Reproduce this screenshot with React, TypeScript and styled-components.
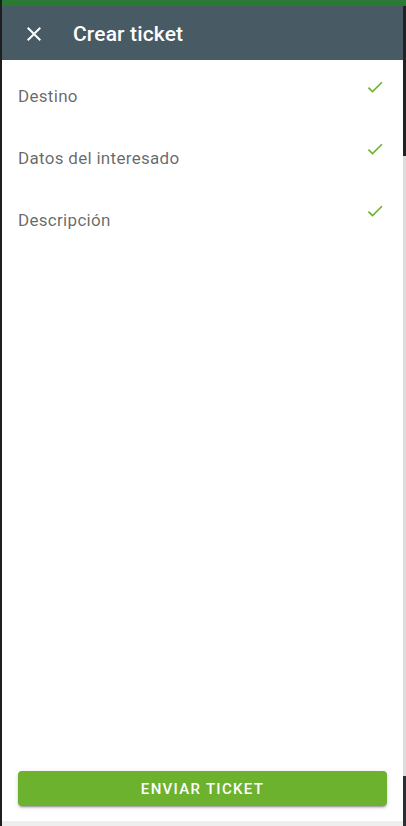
import React from "react";
import styled, { createGlobalStyle } from "styled-components";

const Global = createGlobalStyle`
  html, body { margin: 0; padding: 0; background: #1e1e1e; }
  body { font-family: Roboto, "Liberation Sans", sans-serif; }
  #root { height: 826px; }
`;

const Page = styled.div`
  display: flex;
  height: 826px;
  width: 406px;
  overflow: hidden;
`;

const LeftEdge = styled.div`
  width: 2px;
  flex: none;
  background: #1e1e1e;
`;

const RightEdge = styled.div`
  width: 3px;
  flex: none;
  display: flex;
  flex-direction: column;
`;

const EdgePart = styled.div<{ $h?: number; $c: string }>`
  background: ${(p) => p.$c};
  ${(p) => (p.$h ? `height: ${p.$h}px; flex: none;` : "flex: 1;")}
`;

const Panel = styled.div`
  flex: 1;
  display: flex;
  flex-direction: column;
  background: #fff;
`;

const TopStrip = styled.div`
  height: 6px;
  background: #2a7a35;
  flex: none;
`;

const Header = styled.header`
  height: 54px;
  flex: none;
  background: #485a64;
  display: flex;
  align-items: center;
  padding-left: 20px;
  gap: 27px;
  color: #fff;
`;

const CloseBtn = styled.button`
  width: 24px;
  height: 24px;
  padding: 0;
  border: 0;
  background: none;
  color: #fff;
  display: flex;
  align-items: center;
  justify-content: center;
  cursor: pointer;
  margin-top: 1px;
`;

const Title = styled.h1`
  margin: 2px 0 0;
  font-size: 21px;
  font-weight: 500;
  letter-spacing: 0.15px;
  line-height: 24px;
`;

const Steps = styled.ul`
  list-style: none;
  margin: 0;
  padding: 0;
  flex: 1;
`;

const Step = styled.li`
  height: 62px;
  display: flex;
  justify-content: space-between;
  padding: 0 18px 0 16px;
  box-sizing: border-box;
`;

const StepLabel = styled.span`
  margin-top: 24px;
  font-size: 17px;
  line-height: 25px;
  color: rgba(0, 0, 0, 0.6);
  letter-spacing: 0.3px;
`;

const CheckWrap = styled.span`
  margin-top: 17px;
  width: 20px;
  height: 20px;
  color: #6cb22f;
`;

const Footer = styled.div`
  padding: 0 16px 15px;
  flex: none;
`;

const SendButton = styled.button`
  width: 100%;
  height: 35px;
  border: 0;
  border-radius: 4px;
  background: #6cb22f;
  color: #fff;
  font-family: Roboto, "Liberation Sans", sans-serif;
  font-size: 15px;
  font-weight: 500;
  letter-spacing: 1.3px;
  text-transform: uppercase;
  box-shadow: 0 3px 1px -2px rgba(0, 0, 0, 0.2), 0 2px 2px 0 rgba(0, 0, 0, 0.14),
    0 1px 5px 0 rgba(0, 0, 0, 0.12);
  cursor: pointer;
`;

const BottomStrip = styled.div`
  height: 5px;
  flex: none;
  background: #eeeeee;
`;

const CloseIcon = () => (
  <svg width="24" height="24" viewBox="0 0 24 24" fill="currentColor">
    <path d="M19 6.41 17.59 5 12 10.59 6.41 5 5 6.41 10.59 12 5 17.59 6.41 19 12 13.41 17.59 19 19 17.59 13.41 12z" />
  </svg>
);

const CheckIcon = () => (
  <svg width="20" height="20" viewBox="0 0 24 24" fill="currentColor">
    <path d="M9 16.17 4.83 12l-1.42 1.41L9 19 21 7l-1.41-1.41z" />
  </svg>
);

const steps = ["Destino", "Datos del interesado", "Descripción"];

export default function App() {
  return (
    <>
      <Global />
      <Page>
        <LeftEdge />
        <Panel>
          <TopStrip />
          <Header>
            <CloseBtn aria-label="Cerrar">
              <CloseIcon />
            </CloseBtn>
            <Title>Crear ticket</Title>
          </Header>
          <Steps>
            {steps.map((s) => (
              <Step key={s}>
                <StepLabel>{s}</StepLabel>
                <CheckWrap>
                  <CheckIcon />
                </CheckWrap>
              </Step>
            ))}
          </Steps>
          <Footer>
            <SendButton>Enviar ticket</SendButton>
          </Footer>
          <BottomStrip />
        </Panel>
        <RightEdge>
          <EdgePart $h={6} $c="#2a7a35" />
          <EdgePart $h={150} $c="#222" />
          <EdgePart $c="#dcdcdc" />
          <EdgePart $h={50} $c="#2b2f33" />
        </RightEdge>
      </Page>
    </>
  );
}
